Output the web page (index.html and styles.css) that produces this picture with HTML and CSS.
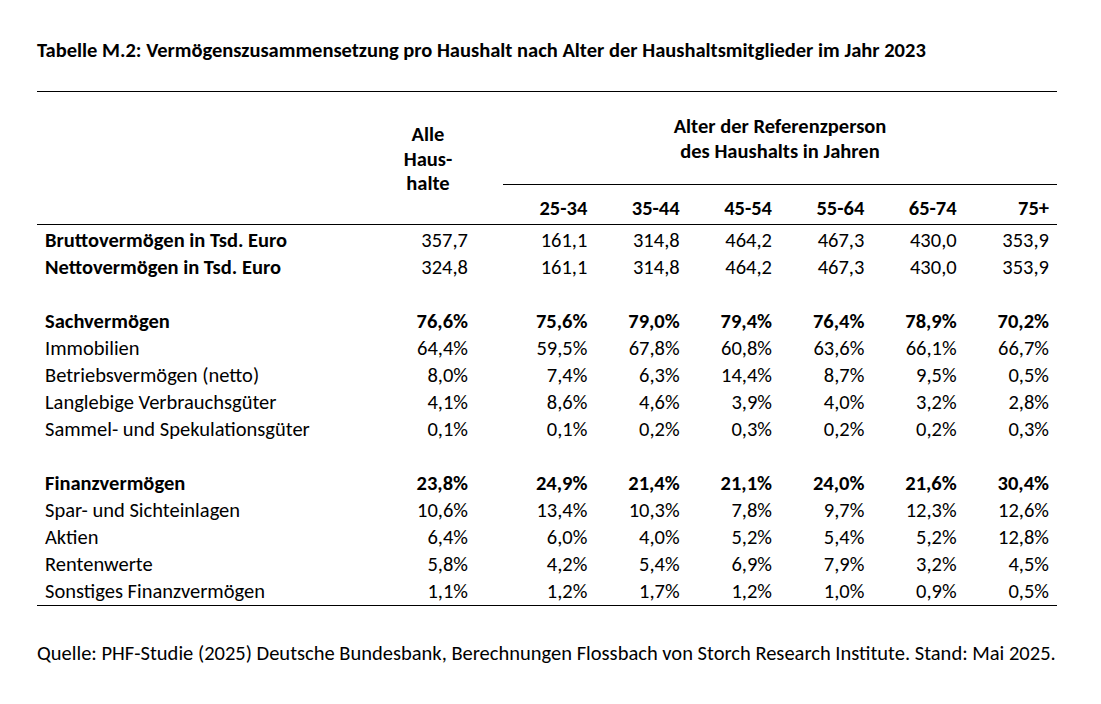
FILE: index.html
```html
<!DOCTYPE html>
<html lang="de">
<head>
<meta charset="utf-8">
<title>Tabelle M.2</title>
<link rel="stylesheet" href="styles.css">
</head>
<body>
<div class="page">
  <h1 class="title">Tabelle M.2: Vermögenszusammensetzung pro Haushalt nach Alter der Haushaltsmitglieder im Jahr 2023</h1>
  <div class="tbl">
    <div class="head">
      <div class="all">Alle<br>Haus-<br>halte</div>
      <div class="group">Alter der Referenzperson<br>des Haushalts in Jahren</div>
      <div class="age a1">25-34</div>
      <div class="age a2">35-44</div>
      <div class="age a3">45-54</div>
      <div class="age a4">55-64</div>
      <div class="age a5">65-74</div>
      <div class="age a6">75+</div>
    </div>
    <div class="body">
      <div class="row bold-label"><span class="lbl">Bruttovermögen in Tsd. Euro</span><span class="num">357,7</span><span class="num c4">161,1</span><span class="num">314,8</span><span class="num">464,2</span><span class="num">467,3</span><span class="num">430,0</span><span class="num">353,9</span></div>
      <div class="row bold-label"><span class="lbl">Nettovermögen in Tsd. Euro</span><span class="num">324,8</span><span class="num c4">161,1</span><span class="num">314,8</span><span class="num">464,2</span><span class="num">467,3</span><span class="num">430,0</span><span class="num">353,9</span></div>
      <div class="row spacer"></div>
      <div class="row bold"><span class="lbl">Sachvermögen</span><span class="num">76,6%</span><span class="num c4">75,6%</span><span class="num">79,0%</span><span class="num">79,4%</span><span class="num">76,4%</span><span class="num">78,9%</span><span class="num">70,2%</span></div>
      <div class="row"><span class="lbl">Immobilien</span><span class="num">64,4%</span><span class="num c4">59,5%</span><span class="num">67,8%</span><span class="num">60,8%</span><span class="num">63,6%</span><span class="num">66,1%</span><span class="num">66,7%</span></div>
      <div class="row"><span class="lbl">Betriebsvermögen (netto)</span><span class="num">8,0%</span><span class="num c4">7,4%</span><span class="num">6,3%</span><span class="num">14,4%</span><span class="num">8,7%</span><span class="num">9,5%</span><span class="num">0,5%</span></div>
      <div class="row"><span class="lbl">Langlebige Verbrauchsgüter</span><span class="num">4,1%</span><span class="num c4">8,6%</span><span class="num">4,6%</span><span class="num">3,9%</span><span class="num">4,0%</span><span class="num">3,2%</span><span class="num">2,8%</span></div>
      <div class="row"><span class="lbl">Sammel- und Spekulationsgüter</span><span class="num">0,1%</span><span class="num c4">0,1%</span><span class="num">0,2%</span><span class="num">0,3%</span><span class="num">0,2%</span><span class="num">0,2%</span><span class="num">0,3%</span></div>
      <div class="row spacer"></div>
      <div class="row bold"><span class="lbl">Finanzvermögen</span><span class="num">23,8%</span><span class="num c4">24,9%</span><span class="num">21,4%</span><span class="num">21,1%</span><span class="num">24,0%</span><span class="num">21,6%</span><span class="num">30,4%</span></div>
      <div class="row"><span class="lbl">Spar- und Sichteinlagen</span><span class="num">10,6%</span><span class="num c4">13,4%</span><span class="num">10,3%</span><span class="num">7,8%</span><span class="num">9,7%</span><span class="num">12,3%</span><span class="num">12,6%</span></div>
      <div class="row"><span class="lbl">Aktien</span><span class="num">6,4%</span><span class="num c4">6,0%</span><span class="num">4,0%</span><span class="num">5,2%</span><span class="num">5,4%</span><span class="num">5,2%</span><span class="num">12,8%</span></div>
      <div class="row"><span class="lbl">Rentenwerte</span><span class="num">5,8%</span><span class="num c4">4,2%</span><span class="num">5,4%</span><span class="num">6,9%</span><span class="num">7,9%</span><span class="num">3,2%</span><span class="num">4,5%</span></div>
      <div class="row last"><span class="lbl">Sonstiges Finanzvermögen</span><span class="num">1,1%</span><span class="num c4">1,2%</span><span class="num">1,7%</span><span class="num">1,2%</span><span class="num">1,0%</span><span class="num">0,9%</span><span class="num">0,5%</span></div>
    </div>
  </div>
  <p class="source">Quelle: PHF-Studie (2025) Deutsche Bundesbank, Berechnungen Flossbach von Storch Research Institute. Stand: Mai 2025.</p>
</div>
</body>
</html>
```

FILE: styles.css
```css
html, body {
  margin: 0;
  padding: 0;
  background: #ffffff;
}

body {
  font-family: "Carlito", "Lato", "Liberation Sans", sans-serif;
  color: #000000;
  font-size: 20.5px;
}

.page {
  padding: 38px 0 0 37px;
  width: 1020px;
}

.title {
  margin: 0;
  font-size: 20.5px;
  font-weight: 700;
  line-height: 24px;
  height: 53px;
}

.tbl {
  width: 1020px;
  border-top: 1px solid #000;
  border-bottom: 1px solid #000;
}

.head,
.row {
  display: grid;
  grid-template-columns: 343px 96px 27px repeat(6, 1fr);
}

.head {
  grid-template-rows: 93px 39px;
  border-bottom: 1px solid #000;
  font-weight: 700;
}

.all {
  grid-column: 2;
  grid-row: 1 / span 2;
  text-align: center;
  line-height: 24.5px;
  padding-top: 30px;
}

.group {
  grid-column: 4 / span 6;
  grid-row: 1;
  text-align: center;
  line-height: 25px;
  padding-top: 22px;
  box-shadow: inset 0 -1px 0 #000;
}

.age {
  grid-row: 2;
  text-align: right;
  padding-right: 8px;
  padding-top: 11px;
  line-height: 25px;
}

.a1 { grid-column: 4; }
.a2 { grid-column: 5; }
.a3 { grid-column: 6; }
.a4 { grid-column: 7; }
.a5 { grid-column: 8; }
.a6 { grid-column: 9; }

.row {
  height: 27px;
  grid-template-rows: 27px;
  align-items: start;
  white-space: nowrap;
}

.row > span {
  box-sizing: border-box;
  height: 27px;
  padding-top: 3px;
  line-height: 24px;
  background: #ffffff;
}

.row.last {
  height: 29px;
}

.c4 {
  grid-column: 4;
}

.lbl {
  padding-left: 8px;
}

.num {
  text-align: right;
  padding-right: 8px;
}

.row.bold,
.row.bold-label .lbl {
  font-weight: 700;
}

.source {
  margin: 35px 0 0 0;
  font-size: 20.5px;
  line-height: 24px;
}
```
